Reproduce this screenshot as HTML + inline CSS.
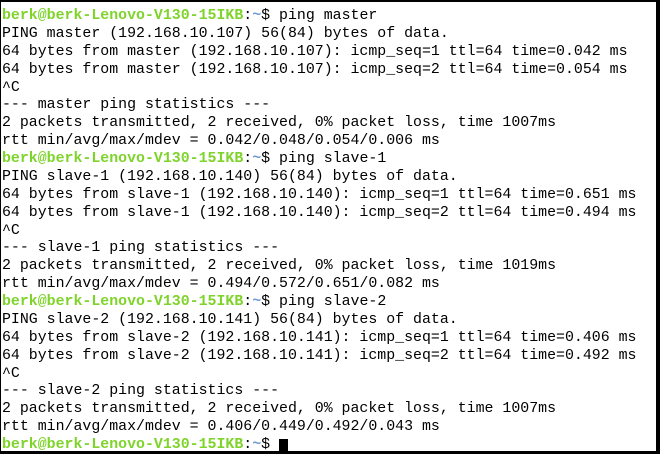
<!DOCTYPE html>
<html><head><meta charset="utf-8"><style>
html,body{margin:0;padding:0;background:#000;}
#t{position:absolute;left:1px;top:2px;width:655px;height:449px;background:#fff;overflow:hidden}
#p{position:absolute;left:1px;top:6px;font-family:"Liberation Mono",monospace;font-size:14.9px;color:#000;}
#p div{height:17.88px;line-height:17.88px;white-space:pre;overflow:visible}
.g{color:#7fd42b;font-weight:bold}
.b{color:#6f9bd0;font-weight:bold}
.c{display:inline-block;width:9px;height:16px;background:#000;vertical-align:top;margin-top:2px}
</style></head><body><div id="t"><div id="p">
<div><span class="g">berk@berk-Lenovo-V130-15IKB</span>:<span class="b">~</span>$ ping master</div>
<div>PING master (192.168.10.107) 56(84) bytes of data.</div>
<div>64 bytes from master (192.168.10.107): icmp_seq=1 ttl=64 time=0.042 ms</div>
<div>64 bytes from master (192.168.10.107): icmp_seq=2 ttl=64 time=0.054 ms</div>
<div>^C</div>
<div>--- master ping statistics ---</div>
<div>2 packets transmitted, 2 received, 0% packet loss, time 1007ms</div>
<div>rtt min/avg/max/mdev = 0.042/0.048/0.054/0.006 ms</div>
<div><span class="g">berk@berk-Lenovo-V130-15IKB</span>:<span class="b">~</span>$ ping slave-1</div>
<div>PING slave-1 (192.168.10.140) 56(84) bytes of data.</div>
<div>64 bytes from slave-1 (192.168.10.140): icmp_seq=1 ttl=64 time=0.651 ms</div>
<div>64 bytes from slave-1 (192.168.10.140): icmp_seq=2 ttl=64 time=0.494 ms</div>
<div>^C</div>
<div>--- slave-1 ping statistics ---</div>
<div>2 packets transmitted, 2 received, 0% packet loss, time 1019ms</div>
<div>rtt min/avg/max/mdev = 0.494/0.572/0.651/0.082 ms</div>
<div><span class="g">berk@berk-Lenovo-V130-15IKB</span>:<span class="b">~</span>$ ping slave-2</div>
<div>PING slave-2 (192.168.10.141) 56(84) bytes of data.</div>
<div>64 bytes from slave-2 (192.168.10.141): icmp_seq=1 ttl=64 time=0.406 ms</div>
<div>64 bytes from slave-2 (192.168.10.141): icmp_seq=2 ttl=64 time=0.492 ms</div>
<div>^C</div>
<div>--- slave-2 ping statistics ---</div>
<div>2 packets transmitted, 2 received, 0% packet loss, time 1007ms</div>
<div>rtt min/avg/max/mdev = 0.406/0.449/0.492/0.043 ms</div>
<div><span class="g">berk@berk-Lenovo-V130-15IKB</span>:<span class="b">~</span>$ <span class="c"></span></div>
</div></div></body></html>
